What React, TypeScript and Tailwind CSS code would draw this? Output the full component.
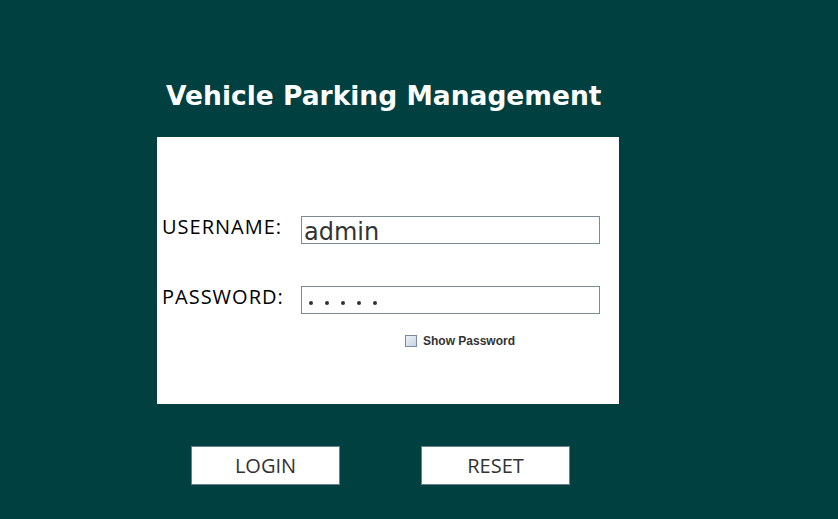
export default function App() {
  return (
    <div className="w-[838px] h-[519px] bg-[#004040] flex flex-col pl-[157px] overflow-hidden">
      {/* Title */}
      <h1 className="mt-[76px] h-[40px] w-[462px] pl-[9px] text-[26.5px] leading-[40px] font-bold text-white whitespace-nowrap font-['DejaVu_Sans',sans-serif]">
        Vehicle Parking Management
      </h1>

      {/* Form panel */}
      <div className="mt-[21px] w-[462px] h-[267px] bg-white flex flex-col pl-[5px] pt-[79px] font-['Open_Sans',sans-serif]">
        <div className="flex items-start h-[28px]">
          <label className="w-[139px] text-[20px] leading-[20px] tracking-[1px] text-black mt-[1px]">USERNAME:</label>
          <div className="w-[299px] h-[28px] border border-[#7a8a99] flex items-end pl-[2px]">
            <span className="text-[24px] leading-[22px] text-[#333] font-['DejaVu_Sans',sans-serif]">admin</span>
          </div>
        </div>

        <div className="flex items-start h-[28px] mt-[42px]">
          <label className="w-[139px] text-[20px] leading-[20px] tracking-[1px] text-black mt-[1px]">PASSWORD:</label>
          <div className="w-[299px] h-[28px] border border-[#7a8a99] flex items-center pl-[7px] gap-[12px] pt-[6px]">
            {[0, 1, 2, 3, 4].map((i) => (
              <span key={i} className="w-[4px] h-[4px] rounded-full bg-[#333]" />
            ))}
          </div>
        </div>

        <div className="flex items-center mt-[18px] ml-[243px] gap-[6px]">
          <span className="w-[12px] h-[12px] border border-[#7a8aa0] bg-gradient-to-br from-[#eef2f8] to-[#c8d4e4]" />
          <span className="text-[12px] font-bold text-[#333] font-['Liberation_Sans',sans-serif]">Show Password</span>
        </div>
      </div>

      {/* Buttons */}
      <div className="flex mt-[42px] pl-[34px] gap-[81px]">
        <button className="w-[149px] h-[39px] bg-white border border-[#6b7f8a] text-[20px] text-[#333] font-['Open_Sans',sans-serif]">
          LOGIN
        </button>
        <button className="w-[149px] h-[39px] bg-white border border-[#6b7f8a] text-[20px] text-[#333] font-['Open_Sans',sans-serif]">
          RESET
        </button>
      </div>
    </div>
  );
}
